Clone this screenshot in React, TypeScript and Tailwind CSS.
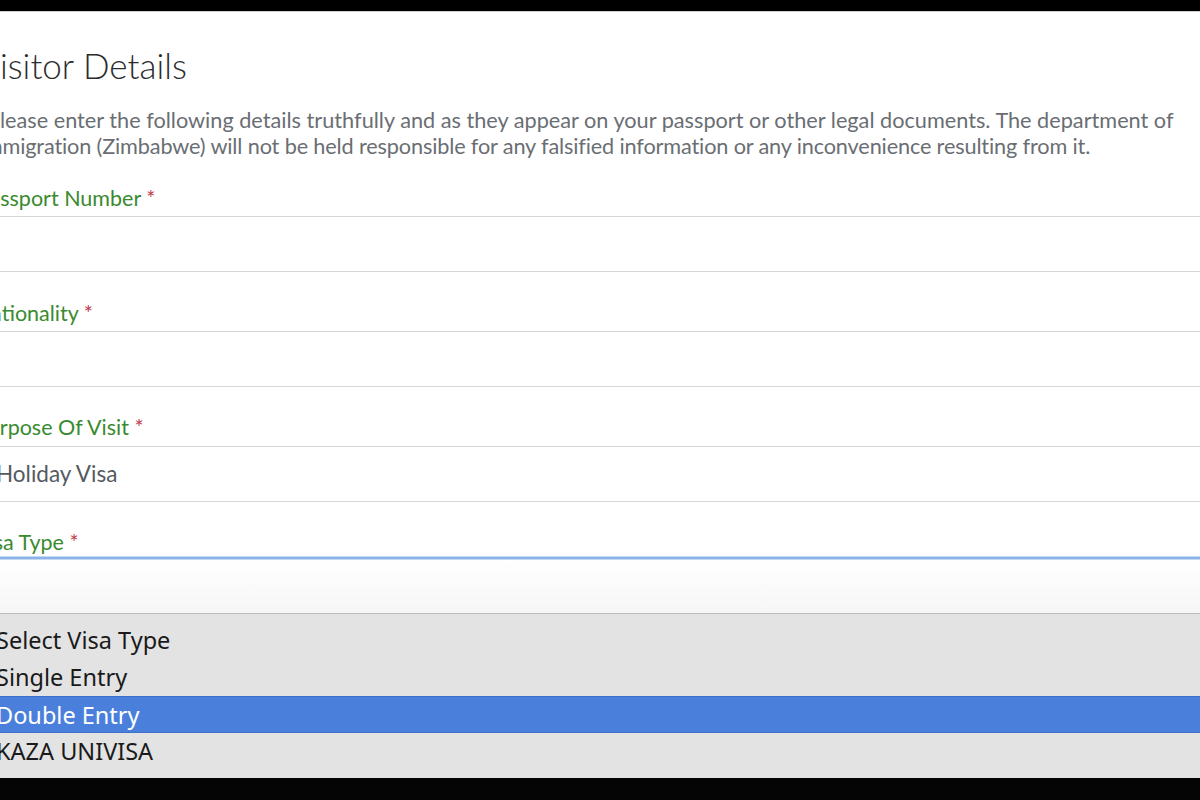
import React from "react";

const Label = ({ text }: { text: string }) => (
  <div className="h-[24px] leading-[24px] text-[21.5px] text-[#3a8a30] whitespace-nowrap">
    {text} <span className="text-[#c0394a]">*</span>
  </div>
);

export default function App() {
  return (
    <div className="w-[1200px] h-[800px] bg-black overflow-hidden flex flex-col" style={{ fontFamily: "Lato, 'Open Sans', sans-serif" }}>
      <div className="h-[11px] bg-black shrink-0" />
      <div className="h-[1px] bg-[#cfcfcf] shrink-0" />
      <div className="bg-white shrink-0 h-[602px] flex flex-col">
        <div className="ml-[-23px] mr-[12px] flex flex-col">
          <h1 className="mt-[33px] h-[40px] leading-[40px] text-[35px] font-light text-[#2b2b2b] whitespace-nowrap">Visitor Details</h1>
          <p className="mt-[22px] ml-[10px] text-[21.7px] leading-[26px] text-[#6a6e73] whitespace-nowrap">
            <span className="block">Please enter the following details truthfully and as they appear on your passport or other legal documents. The department of</span>
            <span className="block ml-[-8px] tracking-[-0.15px]">Immigration (Zimbabwe) will not be held responsible for any falsified information or any inconvenience resulting from it.</span>
          </p>
        </div>
        <div className="ml-[-23px] mt-[27px]">
          <Label text="Passport Number" />
        </div>
        <div className="mt-[6px] h-[56px] border-y border-[#d4d6d8]" />
        <div className="ml-[-25px] mt-[29px]">
          <Label text="Nationality" />
        </div>
        <div className="mt-[6px] h-[56px] border-y border-[#d4d6d8]" />
        <div className="ml-[-25px] mt-[28px]">
          <Label text="Purpose Of Visit" />
        </div>
        <div className="mt-[7px] h-[56px] border-y border-[#d4d6d8] flex items-center">
          <span className="ml-[-4px] text-[22.5px] text-[#555a5f]">Holiday Visa</span>
        </div>
        <div className="ml-[-26px] mt-[28px]">
          <Label text="Visa Type" />
        </div>
        <div className="mt-[2px] h-[4px] bg-[#8db4e8] border-y border-[#c3d8f3]" />
        <div className="flex-1 bg-gradient-to-b from-white to-[#f6f6f6] border-b border-[#bdbdbd]" />
      </div>
      <div
        className="bg-[#e3e3e3] h-[164px] shrink-0 pt-[8px] text-[23.5px] text-[#1a1a1a]"
        style={{ fontFamily: "'Noto Sans', 'Liberation Sans', Arial, sans-serif" }}
      >
        <div className="h-[37px] leading-[37px] ml-[-4px]">Select Visa Type</div>
        <div className="h-[37px] leading-[37px] ml-[-4px]">Single Entry</div>
        <div className="h-[37px] leading-[37px] bg-[#4a7fdc] text-white border-y border-[#3f6fc6]">
          <span className="ml-[-4px]">Double Entry</span>
        </div>
        <div className="h-[37px] leading-[37px] ml-[-4px]">KAZA UNIVISA</div>
      </div>
      <div className="flex-1 bg-[#050505]" />
    </div>
  );
}
